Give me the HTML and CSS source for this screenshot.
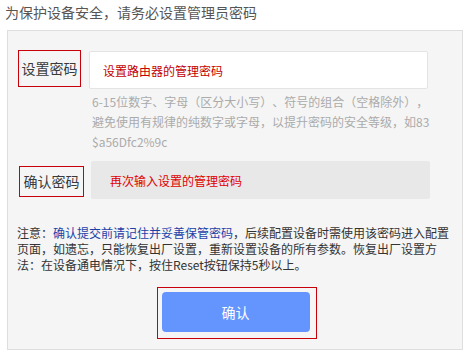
FILE: index.html
```html
<!DOCTYPE html>
<html lang="zh-CN">
<head>
    <meta charset="UTF-8">
    <meta name="viewport" content="width=device-width, initial-scale=1.0">
    <title>设置管理员密码</title>
    <link rel="stylesheet" href="styles.css">
</head>
<body>

    <!-- Top hint -->
    <div class="tip">为保护设备安全，请务必设置管理员密码</div>

    <div class="panel">
        <!-- New password -->
        <div class="row">
            <label class="label mark" for="pwd">设置密码</label>
            <input class="field" id="pwd" type="password" placeholder="设置路由器的管理密码">
        </div>
        <p class="help">6-15位数字、字母（区分大小写）、符号的组合（空格除外），避免使用有规律的纯数字或字母，以提升密码的安全等级，如83$a56Dfc2%9c</p>

        <!-- Confirm password -->
        <div class="row row-confirm">
            <label class="label mark" for="pwd2">确认密码</label>
            <input class="field field-off" id="pwd2" type="password" placeholder="再次输入设置的管理密码">
        </div>

        <p class="note">注意：<span class="note-key">确认提交前请记住并妥善保管密码</span>，后续配置设备时需使用该密码进入配置页面，如遗忘，只能恢复出厂设置，重新设置设备的所有参数。恢复出厂设置方法：在设备通电情况下，按住Reset按钮保持5秒以上。</p>

        <div class="actions">
            <div class="mark btn-box">
                <button class="btn">确认</button>
            </div>
        </div>
    </div>

</body>
</html>
```

FILE: styles.css
```css
body {
    margin: 0;
    width: 465px;
    font-family: "Noto Sans CJK SC", sans-serif;
    font-size: 12px;
    color: #333;
    background: #fff;
    text-spacing-trim: space-all;
}

.tip {
    height: 30px;
    line-height: 24px;
    padding-left: 5px;
    font-size: 14px;
    color: #555;
}

/* grey panel */
.panel {
    box-sizing: border-box;
    margin-left: 7px;
    width: 456px;
    height: 320px;
    padding: 19px 10px 0;
    background: #f5f5f5;
    border: 1px solid #dedede;
}

/* red highlight boxes */
.mark {
    border: 1px solid #c8000a;
}

.row {
    display: flex;
    align-items: flex-start;
    gap: 8px;
}

.label {
    box-sizing: border-box;
    width: 63px;
    height: 37px;
    line-height: 35px;
    text-align: center;
    font-size: 14px;
    color: #3a3a3a;
}

.field {
    box-sizing: border-box;
    width: 339px;
    height: 38px;
    margin-top: 1px;
    padding: 0 0 0 13px;
    font-family: inherit;
    font-size: 12px;
    background: #fff;
    border: 1px solid #e4e4e4;
    border-radius: 2px;
    outline: none;
}

.field::placeholder {
    color: #c40000;
    opacity: 1;
}

.help {
    width: 338px;
    margin: 3px 0 0 74px;
    line-height: 20px;
    color: #ababab;
    word-break: break-all;
}

.row-confirm {
    margin-top: 9px;
}

.row-confirm .label {
    width: 65px;
    height: 31px;
    line-height: 29px;
    margin: 5px 0 0 1px;
}

.row-confirm .field {
    margin: 0 0 0 -1px;
    padding-left: 18px;
    background: #e8e8e8;
    border-color: #e8e8e8;
}

.row-confirm .field::placeholder {
    color: #e00000;
}

.note {
    width: 436px;
    margin: 26px 0 0 -1px;
    line-height: 16px;
}

.note-key {
    color: #1c3fa8;
}

.actions {
    display: flex;
    justify-content: center;
    margin-top: 14px;
    padding-left: 3px;
}

.btn-box {
    padding: 4px 6px 6px 4px;
}

.btn {
    display: block;
    width: 148px;
    height: 40px;
    font-family: inherit;
    font-size: 14px;
    color: #fff;
    background: #6495ff;
    border: none;
    border-radius: 4px;
    cursor: pointer;
}
```
